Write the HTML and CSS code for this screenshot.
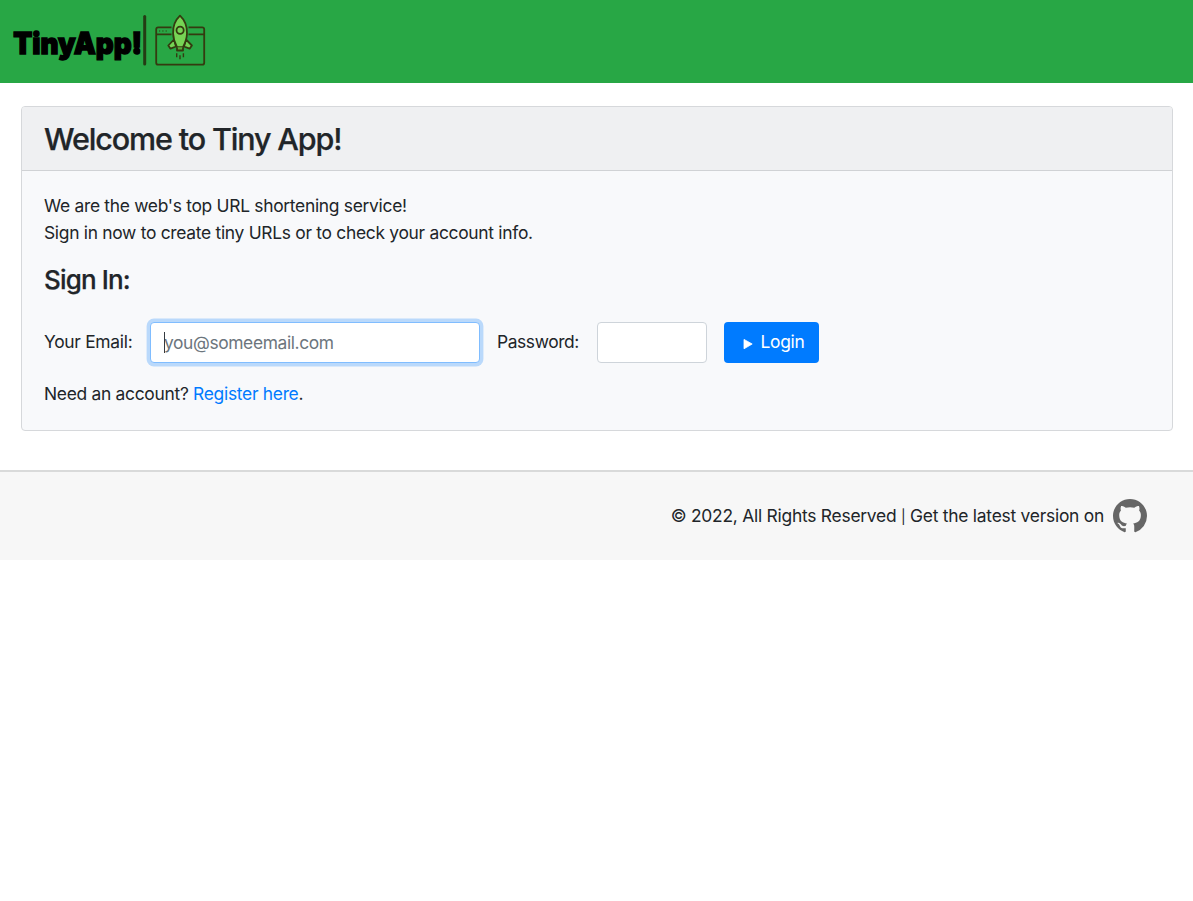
FILE: index.html
```html
<!DOCTYPE html>
<html lang="en">
<head>
<meta charset="utf-8">
<title>TinyApp</title>
<link rel="stylesheet" href="styles.css">
</head>
<body>
<header class="navbar">
  <a class="brand" href="#" aria-label="TinyApp">
    <svg class="logo" width="196" height="56" viewBox="12 12 196 56">
      <text class="logo-text" x="13.2" y="53.9" textLength="129" lengthAdjust="spacingAndGlyphs">TinyApp!</text>
      <path d="M144.7 16.5V64" stroke="#243c14" stroke-width="3" stroke-linecap="round"/>
      <g fill="none" stroke="#343b10" stroke-width="1.8" stroke-linejoin="round">
        <rect x="156.2" y="27.3" width="48" height="37.4" rx="2"/>
        <path d="M156.2 34.3h16M188 34.3h16.2"/>
        <path d="M159 31h1.2M162.3 31h1.2M165.6 31h1.2" stroke-width="1.2"/>
        <path d="M171.5 26h17v10h-17z" fill="#28a745" stroke="none"/>
        <path d="M174 39.5 168.3 45.5 170.5 48.7 176 46.5ZM186 39.5 191.9 45.5 189.6 48.7 184 46.5Z" fill="#76d455"/>
        <path d="M180 15.7C174.8 20.6 172.8 27 173.1 33.5 173.3 39 175 43.3 177 47.2H183C185 43.3 186.8 39 187 33.5 187.2 27 185.2 20.6 180 15.7Z" fill="#76d455"/>
        <path d="M177 47.2V50.5H183V47.2" fill="#5aa83a"/>
        <circle cx="180.1" cy="30.2" r="3.6"/>
        <path d="M176.7 53.2v4M180 55.2v4M183.4 53.2v4" stroke-width="1.4"/>
      </g>
    </svg>
  </a>
</header>
<main class="card">
  <div class="card-header"><h2 class="title">Welcome to Tiny App!</h2></div>
  <div class="card-body">
    <p class="intro">We are the web's top URL shortening service!<br>Sign in now to create tiny URLs or to check your account info.</p>
    <h4 class="subtitle">Sign In:</h4>
    <form class="login-form">
      <label class="email-label" for="email">Your Email:</label>
      <div class="email-field"><span class="caret"></span><input class="control email" id="email" type="email" placeholder="you@someemail.com"></div>
      <label class="password-label" for="password">Password:</label>
      <input class="control password" id="password" type="password">
      <button class="login" type="button"><svg width="10" height="12" viewBox="0 0 10 12"><path d="M1 1.4 9.2 6 1 10.8Z" fill="#fff" stroke="#fff" stroke-width=".8" stroke-linejoin="round"/></svg><span>Login</span></button>
    </form>
    <p class="register">Need an account? <a href="#">Register here</a>.</p>
  </div>
</main>
<footer class="footer">
  <span class="footer-text">© 2022, All Rights Reserved <span class="divider">|</span> Get the latest version on</span>
  <svg width="34" height="34" viewBox="0 0 16 16" fill="#666"><path d="M8 0C3.58 0 0 3.58 0 8c0 3.54 2.29 6.53 5.47 7.59.4.07.55-.17.55-.38 0-.19-.01-.82-.01-1.49-2.01.37-2.53-.49-2.69-.94-.09-.23-.48-.94-.82-1.13-.28-.15-.68-.52-.01-.53.63-.01 1.08.58 1.23.82.72 1.21 1.87.87 2.33.66.07-.52.28-.87.51-1.07-1.78-.2-3.64-.89-3.64-3.95 0-.87.31-1.59.82-2.15-.08-.2-.36-1.02.08-2.12 0 0 .67-.21 2.2.82.64-.18 1.32-.27 2-.27s1.36.09 2 .27c1.53-1.04 2.2-.82 2.2-.82.44 1.1.16 1.92.08 2.12.51.56.82 1.27.82 2.15 0 3.07-1.87 3.75-3.65 3.95.29.25.54.73.54 1.48 0 1.07-.01 1.93-.01 2.2 0 .21.15.46.55.38A8.01 8.01 0 0 0 16 8c0-4.42-3.58-8-8-8z"/></svg>
</footer>
</body>
</html>
```
FILE: styles.css
```css
* { box-sizing: border-box; }
body { margin: 0; background: #fff; color: #212529; font: 400 17.4px/27px Inter, "Liberation Sans", sans-serif; letter-spacing: -0.285px; }
h2, h4, p { margin: 0; }
a { color: #007bff; text-decoration: none; }
.navbar { height: 83px; padding: 12px; background: #28a745; }
.brand, .logo { display: block; }
.logo-text { font: 900 29.5px Inter, sans-serif; fill: #000; stroke: #000; stroke-width: 1.4px; letter-spacing: 0; }
.card { margin: 23px 20px 39px 21px; border: 1px solid #d6d8db; border-radius: 4px; background: #f8f9fb; height: 325px; }
.card-header { height: 64px; padding: 14px 22px; background: #eff0f2; border-bottom: 1px solid #d0d2d5; border-radius: 3px 3px 0 0; }
.title { font-size: 30.5px; line-height: 36px; font-weight: 500; letter-spacing: -1.14px; -webkit-text-stroke: 0.25px #212529; }
.card-body { padding: 21px 22px; }
.subtitle { margin-top: 18px; font-size: 26px; line-height: 32px; font-weight: 500; letter-spacing: -0.85px; -webkit-text-stroke: 0.25px #212529; }
.login-form { display: flex; align-items: center; height: 41px; margin-top: 26px; }
.login-form label { padding-bottom: 2px; }
.email-label { width: 106px; }
.email-field { position: relative; width: 330px; margin-right: 17px; }
.caret { position: absolute; left: 14px; top: 10px; width: 1px; height: 21px; background: #343a40; }
.control { display: block; height: 41px; padding: 0 13px; border: 1px solid #ced4da; border-radius: 4px; background: #fff; font: inherit; letter-spacing: inherit; outline: 0; }
.email { width: 330px; border-color: #80bdff; box-shadow: 0 0 0 3.4px #bad9fb; letter-spacing: -0.38px; }
.email::placeholder { color: #6c757d; opacity: 1; }
.password-label { width: 100px; letter-spacing: -0.4px; }
.password { width: 110px; margin-right: 17px; }
.login { display: flex; align-items: center; gap: 8px; width: 95px; height: 41px; padding: 0 0 2px 18.5px; border: 0; border-radius: 4px; background: #007bff; color: #fff; font: inherit; letter-spacing: inherit; }
.login svg { position: relative; top: 2px; }
.register { margin-top: 17px; }
.footer { display: flex; justify-content: flex-end; align-items: center; gap: 9px; height: 90px; padding-right: 46px; border-top: 2px solid #d9dada; background: #f7f7f7; }
.footer-text { padding-bottom: 2px; letter-spacing: -0.24px; }
.divider { font-size: 14px; line-height: 1; }
```
